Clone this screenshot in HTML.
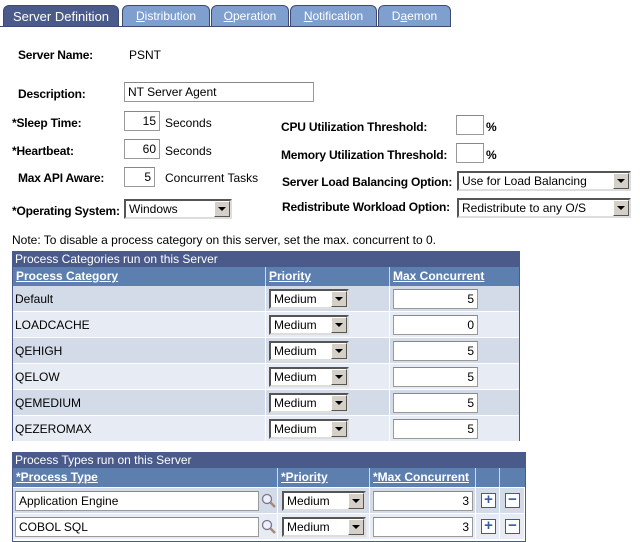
<!DOCTYPE html>
<html><head><style>
body{margin:0;width:640px;height:540px;background:#fff;font-family:"Liberation Sans",Arial,sans-serif;font-size:12px;color:#000;position:relative;overflow:hidden}
.a{position:absolute;white-space:nowrap}
.b{font-weight:bold;letter-spacing:-0.2px}
.tab{position:absolute;top:5px;height:21px;background:#7f9fcf;color:#fff;border:1px solid #3e4a72;border-bottom:none;border-radius:6px 6px 0 0;text-align:center;line-height:21px;font-size:12px}
.tab u{text-decoration:underline}
.in{position:absolute;border:1px solid #999;border-top-color:#888;background:#fff;line-height:18px;padding:0 3px;box-sizing:border-box;height:20px}
.sel{position:absolute;height:20px;box-sizing:border-box;border:2px solid;border-color:#555 #ddd #ddd #555;background:#fff;line-height:16px;padding-left:3px}
.sel:after{content:"";position:absolute;right:0;top:0;width:16px;height:16px;background:#d4d0c8;border:1px solid;border-color:#fff #555 #555 #fff;box-sizing:border-box}
.sel i{position:absolute;right:4px;top:6px;border:4px solid transparent;border-top:4px solid #000;border-bottom:none;z-index:2}
.tt{position:absolute;background:#4a5a8a;color:#fff;height:16px;line-height:16px;padding-left:3px;box-sizing:border-box}
.ch{position:absolute;background:#5d7fb0;color:#fff;font-weight:bold;text-decoration:underline;height:19px;line-height:19px;padding-left:3px;box-sizing:border-box;border-right:1px solid #d0d8e6}
.r{position:absolute;border-right:1px solid #fff;border-bottom:1px solid #fff;box-sizing:border-box}
.num{text-align:right}
.pm{position:absolute;width:15px;height:15px;box-sizing:border-box;border:1px solid #3b5ba0;background:#fff;color:#3b5ba0;font-weight:bold;text-align:center;line-height:12px;font-size:15px}
</style></head><body>
<div class="tab" style="left:3px;width:114px;background:#4a5a8a;font-size:13px">Server Definition</div>
<div class="tab" style="left:122px;width:86px"><u>D</u>istribution</div>
<div class="tab" style="left:211px;width:76px"><u>O</u>peration</div>
<div class="tab" style="left:290px;width:85px"><u>N</u>otification</div>
<div class="tab" style="left:378px;width:71px">D<u>a</u>emon</div>
<div class="a" style="left:0;top:26px;width:450px;height:1px;background:#3e4a72"></div>

<div class="a b" style="left:18px;top:48px">Server Name:</div>
<div class="a" style="left:129px;top:48px">PSNT</div>
<div class="a b" style="left:18px;top:87px">Description:</div>
<div class="in" style="left:124px;top:82px;width:190px">NT Server Agent</div>
<div class="a b" style="left:12px;top:116px">*Sleep Time:</div>
<div class="in num" style="left:124px;top:111px;width:36px">15</div>
<div class="a" style="left:165px;top:116px">Seconds</div>
<div class="a b" style="left:12px;top:144px">*Heartbeat:</div>
<div class="in num" style="left:124px;top:139px;width:36px">60</div>
<div class="a" style="left:165px;top:144px">Seconds</div>
<div class="a b" style="left:18px;top:171px">Max API Aware:</div>
<div class="in num" style="left:124px;top:167px;width:31px">5</div>
<div class="a" style="left:165px;top:171px">Concurrent Tasks</div>
<div class="a b" style="left:12px;top:204px">*Operating System:</div>
<div class="sel" style="left:124px;top:199px;width:108px">Windows<i></i></div>

<div class="a b" style="left:281px;top:120px">CPU Utilization Threshold:</div>
<div class="in" style="left:456px;top:115px;width:28px"></div>
<div class="a b" style="left:486px;top:120px">%</div>
<div class="a b" style="left:281px;top:148px">Memory Utilization Threshold:</div>
<div class="in" style="left:456px;top:143px;width:28px"></div>
<div class="a b" style="left:486px;top:148px">%</div>
<div class="a b" style="left:282px;top:175px">Server Load Balancing Option:</div>
<div class="sel" style="left:457px;top:171px;width:174px">Use for Load Balancing<i></i></div>
<div class="a b" style="left:282px;top:200px">Redistribute Workload Option:</div>
<div class="sel" style="left:457px;top:198px;width:174px">Redistribute to any O/S<i></i></div>

<div class="a" style="left:12px;top:233px">Note: To disable a process category on this server, set the max. concurrent to 0.</div>

<div class="a" style="left:12px;top:251px;width:508px;height:190px;border:1px solid #4a5a8a;box-sizing:border-box"></div>
<div class="tt" style="left:12px;top:251px;width:508px">Process Categories run on this Server</div>
<div class="ch" style="left:13px;top:267px;width:253px">Process Category</div>
<div class="ch" style="left:266px;top:267px;width:124px">Priority</div>
<div class="ch" style="left:390px;top:267px;width:129px;border-right:none">Max Concurrent</div>

<div id="rows"></div>
<script>
var n=["Default","LOADCACHE","QEHIGH","QELOW","QEMEDIUM","QEZEROMAX"],v=[5,0,5,5,5,5],h="";
for(var i=0;i<6;i++){var y=286+i*26,c=i%2?"#e7ebf3":"#d3dbe8";
h+='<div class="r" style="left:13px;top:'+y+'px;width:253px;height:26px;background:'+c+'"></div>';
h+='<div class="r" style="left:266px;top:'+y+'px;width:124px;height:26px;background:'+c+'"></div>';
h+='<div class="r" style="left:390px;top:'+y+'px;width:129px;height:26px;background:'+c+';border-right:none"></div>';
h+='<div class="a" style="left:15px;top:'+(y+6)+'px">'+n[i]+'</div>';
h+='<div class="sel" style="left:269px;top:'+(y+3)+'px;width:80px">Medium<i></i></div>';
h+='<div class="in num" style="left:393px;top:'+(y+3)+'px;width:85px">'+v[i]+'</div>';}
document.getElementById("rows").outerHTML=h;
</script>

<div class="a" style="left:12px;top:452px;width:514px;height:90px;border:1px solid #4a5a8a;box-sizing:border-box"></div>
<div class="tt" style="left:12px;top:452px;width:514px">Process Types run on this Server</div>
<div class="ch" style="left:13px;top:468px;width:265px">*Process Type</div>
<div class="ch" style="left:278px;top:468px;width:92px">*Priority</div>
<div class="ch" style="left:370px;top:468px;width:106px">*Max Concurrent</div>
<div class="ch" style="left:476px;top:468px;width:24px"></div>
<div class="ch" style="left:500px;top:468px;width:25px;border-right:none"></div>
<div id="rows2"></div>
<script>
var m=["Application Engine","COBOL SQL"],h2="";
for(var i=0;i<2;i++){var y=488+i*26,c=i%2?"#e7ebf3":"#d3dbe8";
[[13,265],[278,92],[370,106],[476,24],[500,25]].forEach(function(p){h2+='<div class="r" style="left:'+p[0]+'px;top:'+y+'px;width:'+p[1]+'px;height:26px;background:'+c+'"></div>';});
h2+='<div class="in" style="left:15px;top:'+(y+3)+'px;width:244px">'+m[i]+'</div>';
h2+='<svg class="a" style="left:261px;top:'+(y+5)+'px" width="16" height="16"><circle cx="6" cy="6" r="4.5" fill="#eef" stroke="#778" stroke-width="1.3"/><line x1="9.5" y1="9.5" x2="14" y2="14" stroke="#a87" stroke-width="2.5"/></svg>';
h2+='<div class="sel" style="left:282px;top:'+(y+3)+'px;width:84px">Medium<i></i></div>';
h2+='<div class="in num" style="left:373px;top:'+(y+3)+'px;width:100px">3</div>';
h2+='<div class="pm" style="left:481px;top:'+(y+5)+'px">+</div>';
h2+='<div class="pm" style="left:505px;top:'+(y+5)+'px">&minus;</div>';}
document.getElementById("rows2").outerHTML=h2;
</script>
</body></html>
